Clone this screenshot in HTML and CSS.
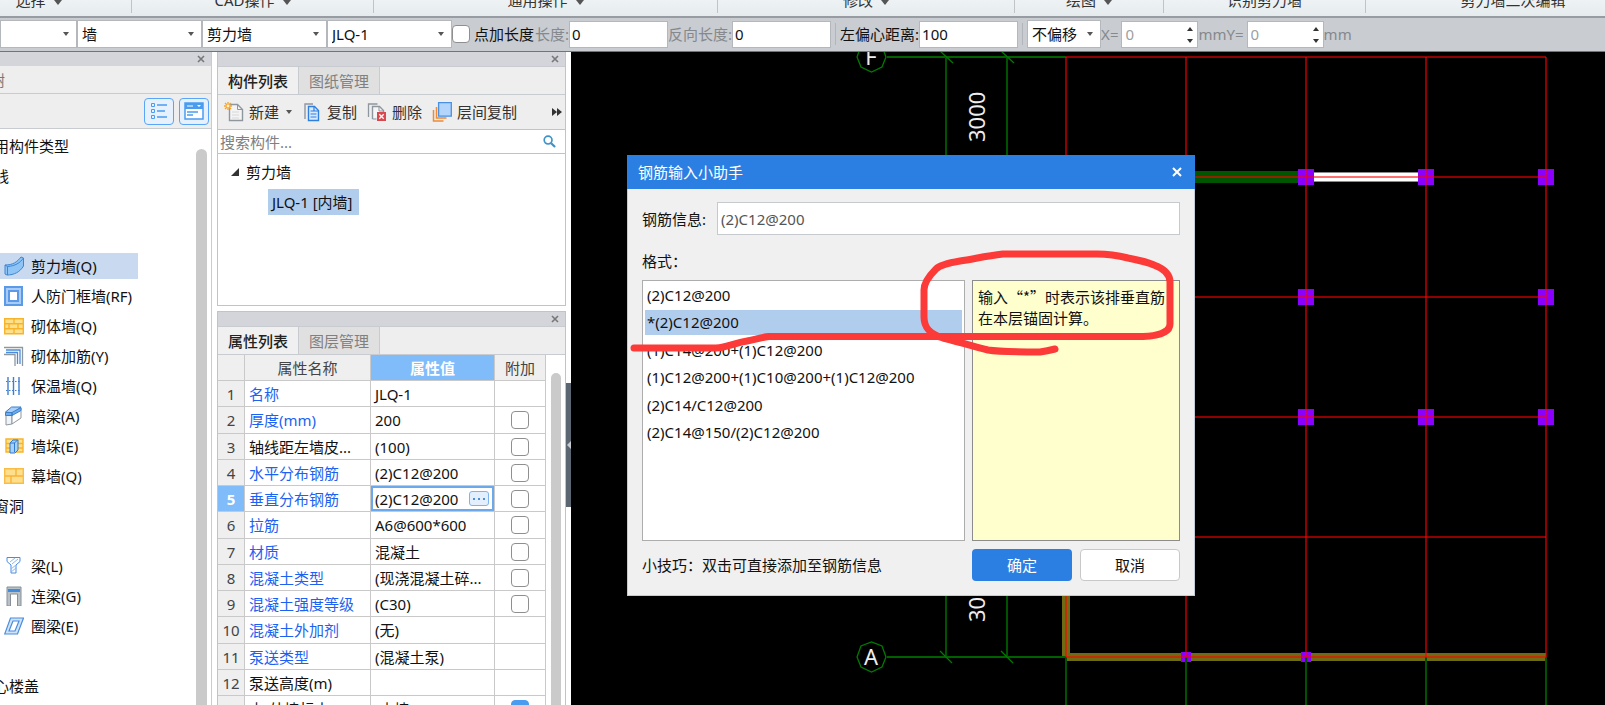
FILE: index.html
```html
<!DOCTYPE html>
<html lang="zh-CN">
<head>
<meta charset="utf-8">
<title>钢筋输入小助手</title>
<link rel="stylesheet" href="styles.css">
</head>
<body>
<header class="ribbon">
  <div class="group g-select"><span>选择</span><i class="caret"></i></div>
  <div class="group g-cad"><span>CAD操作</span><i class="caret"></i></div>
  <div class="group g-common"><span>通用操作</span><i class="caret"></i></div>
  <div class="group g-modify"><span>修改</span><i class="caret"></i></div>
  <div class="group g-draw"><span>绘图</span><i class="caret"></i></div>
  <div class="group g-detect"><span>识别剪力墙</span></div>
  <div class="group g-edit"><span>剪力墙二次编辑</span></div>
</header>

<form class="options">
  <span class="combo combo-floor"><select aria-label="楼层"><option></option></select></span>
  <span class="combo"><select aria-label="类别"><option>墙</option></select></span>
  <span class="combo"><select aria-label="类型"><option>剪力墙</option></select></span>
  <span class="combo"><select aria-label="构件"><option>JLQ-1</option></select></span>
  <label class="check-label"><input type="checkbox" class="check">点加长度</label>
  <label class="dim" for="len">长度:</label><input id="len" class="field" type="text" value="0">
  <label class="dim" for="rev">反向长度:</label><input id="rev" class="field" type="text" value="0">
  <i class="bar"></i>
  <label for="ecc">左偏心距离:</label><input id="ecc" class="field" type="text" value="100">
  <i class="bar"></i>
  <span class="combo combo-shift"><select aria-label="偏移"><option>不偏移</option></select></span>
  <label class="dim" for="ox">X=</label>
  <span class="spin"><input id="ox" type="text" value="0" disabled><button type="button" class="up" aria-label="增加X"></button><button type="button" class="down" aria-label="减少X"></button></span>
  <label class="dim" for="oy">mmY=</label>
  <span class="spin"><input id="oy" type="text" value="0" disabled><button type="button" class="up" aria-label="增加Y"></button><button type="button" class="down" aria-label="减少Y"></button></span>
  <span class="dim">mm</span>
</form>

<main class="workspace">
  <aside class="nav">
    <div class="strip"><button type="button" class="x" aria-label="关闭导航"><svg viewBox="0 0 8 8"><path d="M1 1l6 6M7 1l-6 6"/></svg></button></div>
    <div class="nav-tab"><span>树</span></div>
    <div class="nav-tools">
      <button type="button" aria-label="列表视图"><svg width="18" height="20" viewBox="0 0 18 20" fill="none" stroke="#4a9cf0"><path d="M1.500 2.500h3v3h-3zM1.500 8.500h3v3h-3zM1.500 14.500h3v3h-3z"/><path d="M7 4h10M7 10h8M7 16h10" stroke-width="1.500"/></svg></button>
      <button type="button" aria-label="卡片视图"><svg width="20" height="20" viewBox="0 0 20 20"><path d="M1 2h18v16H1z" fill="#fff" stroke="#4a9cf0" stroke-width="1.500"/><path d="M1 2h18v6H1z" fill="#4a9cf0"/><path d="M4 4v2M6 4v2M8 4v2" stroke="#fff"/><path d="M13 4h4l-2 2z" fill="#fff"/><path d="M3 11h11M3 14h6" stroke="#4a9cf0" stroke-width="1.500"/></svg></button>
    </div>
    <div class="nav-body">
      <ul class="types">
        <li class="head">用构件类型</li>
        <li class="head">线</li>
        <li></li>
        <li></li>
        <li class="on"><svg viewBox="0 0 20 20"><path d="M1 9C9 9 13 6 17 1l2.500 1v8C16 16 10 19 3 19l-2-1z" fill="#8fc4f6" stroke="#3e86d0"/><path d="M1 9l2.500 1.500C11 10 16 7 19.500 2M3.500 10.500V19" fill="none" stroke="#3e86d0"/></svg><span>剪力墙(Q)</span></li>
        <li><svg viewBox="0 0 20 20"><path d="M0 0h19v20H0z" fill="#5b9ae6"/><path d="M2 2h15v16H2z" fill="#a9cbf5"/><path d="M4 4h11v12H4z" fill="#5b9ae6"/><path d="M6 6h7v8H6z" fill="#fff"/></svg><span>人防门框墙(RF)</span></li>
        <li><svg viewBox="0 0 20 20"><path d="M.7 2.700h18.600v15H.7z" fill="#ffe08a" stroke="#f8b32c" stroke-width="1.400"/><path d="M1 7.700h18M1 12.700h18M10 3v5M5 8v5M14 8v5M10 13v5" stroke="#f8b32c" stroke-width="1.400"/></svg><span>砌体墙(Q)</span></li>
        <li><svg viewBox="0 0 20 20" fill="none"><path d="M0 1.500h18.500V20M0 8.500h11V20" stroke="#8f979e" stroke-width="1.300"/><path d="M2 4h14v14M2 6.500h11.500V18" stroke="#4a8cdc" stroke-width="1.300"/></svg><span>砌体加筋(Y)</span></li>
        <li><svg viewBox="0 0 20 20" fill="none" stroke="#3f7fd0"><path d="M4 1v18M9.500 1v18M15 1v18" stroke-width="1.400"/><path d="M2 5.500h15M2 14.500h15" stroke-dasharray="1.500 1.500"/></svg><span>保温墙(Q)</span></li>
        <li><svg viewBox="0 0 20 20"><path d="M2 7h6v11l-6 1z" fill="#eef4fa" stroke="#8f979e"/><path d="M8 8l9-6v10l-9 6z" fill="#fff" stroke="#8f979e"/><path d="M1.500 6l6-5h9.500l-8 6z" fill="#a9d0fa" stroke="#3e7fc8"/><path d="M1.500 6.500h6.500V9.500H1.500zM8 6.500l9-5v3l-9 5z" fill="#6daef2" stroke="#3e7fc8"/></svg><span>暗梁(A)</span></li>
        <li><svg viewBox="0 0 20 20"><path d="M2 3h17v13H2z" fill="#ffe08a" stroke="#f8b32c" stroke-width="1.400"/><path d="M2 7.500h17M2 12h17" stroke="#f8b32c" stroke-width="1.400"/><path d="M6 7l3-3h5v10l-3 3H6z" fill="#a9d0fa" stroke="#2f7bd0"/><path d="M10.500 7v9M6 7h4.500l3-3" fill="none" stroke="#2f7bd0"/></svg><span>墙垛(E)</span></li>
        <li><svg viewBox="0 0 20 20"><path d="M.7 2.700h18.600v14.600H.7z" fill="#ffdf8c" stroke="#f9bd45" stroke-width="1.400"/><path d="M1 10h18M12 3v7M7 10v7" stroke="#f9b23a" stroke-width="1.400"/></svg><span>幕墙(Q)</span></li>
        <li class="head">窗洞</li>
        <li></li>
        <li><svg viewBox="0 0 20 20" fill="none" stroke="#4a8cdc"><path d="M3 1.500h13v4L12 9v8H7V9L3 5.500z"/><path d="M6 6l5-4M8 8l6-5M7 13l5-4M7 16l5-4" stroke="#8db9ec"/></svg><span>梁(L)</span></li>
        <li><svg viewBox="0 0 20 20"><path d="M3 1h14v19h-3.500V8h-7v12H3z" fill="#b9c0c6" stroke="#87909a"/><path d="M4 3h12v3H4z" fill="#3e8be0"/></svg><span>连梁(G)</span></li>
        <li><svg viewBox="0 0 20 20" fill="#cfe3fb" fill-rule="evenodd" stroke="#4a8cdc"><path d="M6.500 2h13l-6 16H.7zM9 5L5 15h6l4-10z" stroke-width="1.200"/></svg><span>圈梁(E)</span></li>
        <li></li>
        <li class="head">心楼盖</li>
      </ul>
      <div class="thumb"></div>
    </div>
  </aside>

  <div class="middle">
    <section class="panel parts">
      <div class="strip"><button type="button" class="x" aria-label="关闭构件列表"><svg viewBox="0 0 8 8"><path d="M1 1l6 6M7 1l-6 6"/></svg></button></div>
      <div class="tabs"><button type="button" class="tab active">构件列表</button><button type="button" class="tab">图纸管理</button></div>
      <div class="tools">
        <button type="button" class="tool"><svg viewBox="0 0 20 20"><path d="M5.500 2.500h8l5 5v11h-13z" fill="#f4f4f4" stroke="#8f979e" stroke-width="1.400"/><path d="M13.500 2.500v5h5" fill="none" stroke="#8f979e"/><path d="M8 10h7M8 13h7M8 16h7" stroke="#d8d8d8"/><path d="M4 0v8M0 4h8M1 1l6 6M7 1L1 7" stroke="#f9a52c" stroke-width="1.400"/><circle cx="4" cy="4" r="1.400" fill="#fff3d0"/></svg>新建<i class="caret small"></i></button>
        <button type="button" class="tool"><svg viewBox="0 0 20 20"><path d="M3 17V2h8" fill="none" stroke="#8f979e" stroke-width="1.400"/><path d="M6.500 4.500h6l4 4v10h-10z" fill="#d9eaff" stroke="#2f7fdc" stroke-width="1.400"/><path d="M12 4.500v4.500h4.500M8.500 9h3M8.500 12h6M8.500 15h6" fill="none" stroke="#2f7fdc" stroke-width="1.200"/></svg>复制</button>
        <button type="button" class="tool"><svg viewBox="0 0 20 20"><path d="M1.500 15V2h9" fill="none" stroke="#8f979e" stroke-width="1.300"/><path d="M5.500 17V4.500h7l4 4V12" fill="#f6f6f6" stroke="#8f979e" stroke-width="1.400"/><path d="M5.500 17h4M12 4.500V9h4.500" fill="none" stroke="#8f979e"/><path d="M10 10h9v9h-9z" fill="#d9484c"/><path d="M12.300 12.300l4.400 4.400M16.700 12.300l-4.400 4.400" stroke="#fff" stroke-width="1.300"/></svg>删除</button>
        <button type="button" class="tool"><svg viewBox="0 0 20 20"><path d="M1.500 8v11h10M4.500 5v11h10" fill="none" stroke="#f08a35" stroke-width="1.500"/><path d="M6.600.7h12.700v13.500H6.600z" fill="#b3d4fb" stroke="#4a90e2" stroke-width="1.300"/></svg>层间复制</button>
        <button type="button" class="more" aria-label="更多"><svg viewBox="0 0 10 8"><path d="M0 0l5 4-5 4zM5 0l5 4-5 4z" fill="#333"/></svg></button>
      </div>
      <div class="search"><input type="text" aria-label="搜索构件" placeholder="搜索构件..."><svg viewBox="0 0 14 14" fill="none" stroke="#3d93c8"><circle cx="5.500" cy="5.500" r="4.200" stroke-width="1.800"/><path d="M8.800 8.800L13 13" stroke-width="2.400"/></svg></div>
      <div class="tree">
        <div class="node"><svg viewBox="0 0 8 8"><path d="M8 0v8H0z" fill="#333"/></svg>剪力墙</div>
        <div class="leaf"><span>JLQ-1 [内墙]</span></div>
      </div>
    </section>

    <section class="panel props">
      <div class="strip"><button type="button" class="x" aria-label="关闭属性列表"><svg viewBox="0 0 8 8"><path d="M1 1l6 6M7 1l-6 6"/></svg></button></div>
      <div class="tabs"><button type="button" class="tab active">属性列表</button><button type="button" class="tab">图层管理</button></div>
      <div class="grid-area">
        <table>
          <colgroup><col class="c-num"><col class="c-name"><col class="c-value"><col class="c-extra"></colgroup>
          <thead><tr><th></th><th>属性名称</th><th class="active">属性值</th><th>附加</th></tr></thead>
          <tbody>
            <tr><th>1</th><td class="link">名称</td><td>JLQ-1</td><td></td></tr>
            <tr><th>2</th><td class="link">厚度(mm)</td><td>200</td><td><input type="checkbox" class="check" aria-label="厚度附加"></td></tr>
            <tr><th>3</th><td>轴线距左墙皮...</td><td>(100)</td><td><input type="checkbox" class="check" aria-label="轴线距附加"></td></tr>
            <tr><th>4</th><td class="link">水平分布钢筋</td><td>(2)C12@200</td><td><input type="checkbox" class="check" aria-label="水平分布钢筋附加"></td></tr>
            <tr class="current"><th>5</th><td class="link">垂直分布钢筋</td><td class="edit"><div><input type="text" aria-label="垂直分布钢筋" value="(2)C12@200"><button type="button" aria-label="打开输入助手"><svg viewBox="0 0 12 2"><path d="M0 0h2v2H0zM5 0h2v2H5zM10 0h2v2h-2z" fill="#4a8fd8"/></svg></button></div></td><td><input type="checkbox" class="check" aria-label="垂直分布钢筋附加"></td></tr>
            <tr><th>6</th><td class="link">拉筋</td><td>A6@600*600</td><td><input type="checkbox" class="check" aria-label="拉筋附加"></td></tr>
            <tr><th>7</th><td class="link">材质</td><td>混凝土</td><td><input type="checkbox" class="check" aria-label="材质附加"></td></tr>
            <tr><th>8</th><td class="link">混凝土类型</td><td>(现浇混凝土碎...</td><td><input type="checkbox" class="check" aria-label="混凝土类型附加"></td></tr>
            <tr><th>9</th><td class="link">混凝土强度等级</td><td>(C30)</td><td><input type="checkbox" class="check" aria-label="强度等级附加"></td></tr>
            <tr><th>10</th><td class="link">混凝土外加剂</td><td>(无)</td><td></td></tr>
            <tr><th>11</th><td class="link">泵送类型</td><td>(混凝土泵)</td><td></td></tr>
            <tr><th>12</th><td>泵送高度(m)</td><td></td><td></td></tr>
            <tr><th>13</th><td>内/外墙标志</td><td>(内墙)</td><td><input type="checkbox" class="check" aria-label="内外墙标志附加" checked></td></tr>
          </tbody>
        </table>
        <div class="thumb"></div>
      </div>
    </section>
  </div>

  <div class="splitter"><button type="button" aria-label="折叠面板"><svg viewBox="0 0 4 8"><path d="M4 0v8L0 4z" fill="#c8ccd0"/></svg></button></div>

  <section class="canvas">
    <svg class="drawing" viewBox="571 52 1034 653" preserveAspectRatio="xMinYMin slice">
      <path d="M1195 177H1298" stroke="#005500" stroke-width="12"/>
      <path d="M1314 177H1418" stroke="#8a8a8a" stroke-width="10"/>
      <path d="M1314 177H1418" stroke="#fff" stroke-width="8"/>
      <path d="M1066 590V657" stroke="#6f6b14" stroke-width="8"/>
      <path d="M1066 657H1546" stroke="#6f6b14" stroke-width="8"/>
      <g fill="#8a00ff">
        <path d="M1298 169h16v16h-16zM1418 169h16v16h-16zM1538 169h16v16h-16zM1298 289h16v16h-16zM1538 289h16v16h-16zM1298 409h16v16h-16zM1418 409h16v16h-16zM1538 409h16v16h-16z"/>
        <path d="M1181 652h10v10h-10zM1301 652h10v10h-10z"/>
      </g>
      <g stroke="#005200" stroke-width="2">
        <path d="M887 57H1066M887 657H1066" stroke="#006000"/>
        <path d="M946 57V657M1007 57V657"/>
        <path d="M1066 657V705M1186 657V705M1306 657V705M1426 657V705M1546 657V705"/>
      </g>
      <g fill="none" stroke="#007a00" stroke-width="1.300">
        <path d="M940 51l13 12M1001 51l13 12M940 651l12 12M1001 651l12 12"/>
        <path d="M886 57l-4 10-10.500 5-10.500-5-4-10 4-11 10.500-4 10.500 4z"/>
        <path d="M886 657l-4 10-10.500 5-10.500-5-4-10 4-11 10.500-4 10.500 4z"/>
      </g>
      <g fill="none" stroke="#ff0000" stroke-opacity=".56" stroke-width="2">
        <path d="M1066 57H1546M1066 177H1546M1066 297H1546M1066 417H1546M1066 537H1546M1066 657H1546"/>
        <path d="M1066 57V657M1186 57V657M1306 57V657M1426 57V657M1546 57V657"/>
      </g>
      <g class="axis-text">
        <text x="871" y="65" text-anchor="middle">F</text>
        <text x="871" y="665" text-anchor="middle">A</text>
        <text transform="translate(985 142) rotate(-90)">3000</text>
        <text transform="translate(985 622) rotate(-90)">3000</text>
      </g>
    </svg>

    <form class="dialog" role="dialog" aria-labelledby="dlg-title">
      <div class="title"><span id="dlg-title">钢筋输入小助手</span><button type="button" aria-label="关闭"><svg viewBox="0 0 10 10"><path d="M1 1l8 8M9 1L1 9"/></svg></button></div>
      <div class="body">
        <div class="info"><label for="rebar">钢筋信息:</label><input id="rebar" type="text" value="(2)C12@200"></div>
        <div class="format">格式：</div>
        <div class="columns">
          <ul class="formats">
            <li>(2)C12@200</li>
            <li class="on">*(2)C12@200</li>
            <li>(1)C14@200+(1)C12@200</li>
            <li>(1)C12@200+(1)C10@200+(1)C12@200</li>
            <li>(2)C14/C12@200</li>
            <li>(2)C14@150/(2)C12@200</li>
          </ul>
          <p class="hint">输入“*”时表示该排垂直筋在本层锚固计算。</p>
        </div>
        <div class="foot"><span>小技巧：双击可直接添加至钢筋信息</span><button type="button" class="ok">确定</button><button type="button" class="cancel">取消</button></div>
      </div>
      <svg class="markup" viewBox="627 155 568 441"><path d="M634 348H716C728 347 734 343 747 341C757 339 762 337 769 336.500H1143C1156 336 1170 333 1170 324V282C1170 273 1162 268 1154 265C1148 262 1138 260 1128 258C1116 255 1108 254 1097 254H1003C985 256 974 259 960 261C948 263 940 265 936 269C929 276 924 284 924 290V317C924 328 930 334 943 338C955 341 975 347 988 350C1000 352 1018 352 1040 352C1047 351 1051 350 1055 349"/></svg>
    </form>
  </section>
</main>
</body>
</html>
```

FILE: styles.css
```css
* { box-sizing: border-box; }

body {
  margin: 0;
  height: 100vh;
  display: flex;
  flex-direction: column;
  overflow: hidden;
  background: #fff;
  color: #111;
  font: 15px/20px "Noto Sans", "Noto Sans CJK SC", sans-serif;
}

button, input, select { font: inherit; color: inherit; margin: 0; }
button { padding: 0; border: 0; background: none; }
ul { margin: 0; padding: 0; list-style: none; }
svg { display: block; }

.caret {
  border: 4px solid transparent;
  border-top: 5px solid #555;
  border-bottom: 0;
}
.caret.small { border-width: 4px 3px 0; margin-left: 2px; }

/* Ribbon */
.ribbon {
  display: flex;
  flex: none;
  height: 18px;
  overflow: hidden;
  background: linear-gradient(#eef2f4, #e6ebed);
  border-bottom: 2px solid #979ca2;
  color: #333;
}
.group {
  flex: none;
  display: flex;
  justify-content: center;
  align-items: center;
  gap: 8px;
  height: 13px;
  border-right: 1px solid #c0c4c8;
}
.group span { margin-top: -14px; }
.group .caret { margin-top: -8px; }
.g-select { width: 186px; margin-left: -54px; }
.g-cad { width: 242px; }
.g-common { width: 344px; }
.g-modify { width: 297px; }
.g-draw { width: 149px; }
.g-detect { width: 202px; }
.g-edit { width: 294px; border: 0; }

/* Option bar */
.options {
  flex: none;
  display: flex;
  align-items: center;
  height: 34px;
  padding-bottom: 1px;
  overflow: hidden;
  background: #c9ccd1;
  border-bottom: 1px solid #70757b;
  white-space: nowrap;
}
.options > * { flex: none; }
.combo { position: relative; width: 125px; }
.combo-floor { width: 77px; }
.combo-shift { width: 74px; }
.combo select {
  appearance: none;
  display: block;
  width: 100%;
  height: 28px;
  padding: 0 4px;
  border: 1px solid #b4b7bb;
  border-radius: 0;
  background: #fff;
}
.combo::after {
  content: "";
  position: absolute;
  right: 8px;
  top: 12px;
  border: 3px solid transparent;
  border-top: 4px solid #555;
  border-bottom: 0;
}
.check {
  appearance: none;
  display: block;
  width: 18px;
  height: 18px;
  border: 1px solid #8f8f8f;
  border-radius: 4px;
  background: #fff;
}
.check:checked { background: #4a9cf0; border-color: #4a9cf0; }
.check-label { display: flex; align-items: center; gap: 4px; margin-right: 1px; }
.dim { color: #85888c; }
.field {
  width: 99px;
  height: 27px;
  padding: 0 2px;
  border: 1px solid #b4b7bb;
  background: #fff;
}
.bar { width: 1px; height: 22px; margin: 0 4px; background: #b2b6bb; }
.spin { position: relative; width: 77px; margin-left: 3px; }
.spin input {
  display: block;
  width: 100%;
  height: 27px;
  padding: 0 3px;
  border: 1px solid #b4b7bb;
  background: #fff;
  color: #a0a0a0;
}
.spin button {
  position: absolute;
  right: 5px;
  border: 3px solid transparent;
}
.spin .up { top: 6px; border-top: 0; border-bottom: 4px solid #333; }
.spin .down { bottom: 5px; border-bottom: 0; border-top: 4px solid #333; }

/* Workspace */
.workspace {
  flex: 1;
  min-height: 0;
  display: grid;
  grid-template-columns: 212px 349px 5px 1fr;
  grid-template-rows: minmax(0, 1fr);
}
.workspace .middle { margin-left: 5px; margin-right: -5px; }
.workspace .splitter { margin-left: 5px; margin-right: -5px; }
.workspace .canvas { margin-left: 5px; }

.strip {
  flex: none;
  display: flex;
  justify-content: flex-end;
  align-items: center;
  height: 14px;
  padding-right: 6px;
  background: #d3d5da;
}
.strip svg { width: 8px; height: 8px; stroke: #777; stroke-width: 1.6; }
.thumb { background: #cacaca; border-radius: 6px 6px 0 0; }

/* Navigation */
.nav {
  display: flex;
  flex-direction: column;
  border-right: 1px solid #c8cbd0;
}
.nav-tab {
  flex: none;
  height: 28px;
  line-height: 28px;
  overflow: hidden;
  background: #eee;
  border-bottom: 1px solid #c8cbd0;
  color: #777;
}
.nav-tab span { margin-left: -10px; }
.nav-tools {
  flex: none;
  display: flex;
  justify-content: flex-end;
  align-items: center;
  gap: 5px;
  height: 35px;
  padding-right: 2px;
  background: #eee;
  border-bottom: 1px solid #c8cbd0;
}
.nav-tools button {
  display: grid;
  place-items: center;
  width: 30px;
  height: 27px;
  border: 1px solid #58a6f5;
  border-radius: 4px;
  background: #e6f1fd;
}
.nav-body {
  flex: 1;
  min-height: 0;
  display: flex;
  justify-content: space-between;
  overflow: hidden;
  padding-top: 2px;
}
.nav-body .thumb { width: 11px; margin: 18px 4px 0 0; }
.types { width: 138px; white-space: nowrap; }
.types li {
  display: flex;
  align-items: center;
  height: 26px;
  margin: 2px 0 4px;
  padding-left: 4px;
  gap: 7px;
}
.types li.head { padding-left: 0; text-indent: -6px; }
.types li.on { background: #c9d9f0; }
.types svg { width: 20px; height: 20px; }

/* Middle panels */
.middle {
  display: grid;
  grid-template-rows: 254px minmax(0, 1fr);
  gap: 5px;
}
.panel {
  display: flex;
  flex-direction: column;
  min-height: 0;
  border: 1px solid #c0c4c9;
  border-top: 0;
}
.props { border-top: 1px solid #c0c4c9; border-bottom: 0; }
.tabs {
  flex: none;
  display: flex;
  height: 29px;
  background: #eee;
  border-top: 1px solid #c8cbd0;
  border-bottom: 1px solid #c8cbd0;
}
.tab {
  width: 81px;
  border-right: 1px solid #c8cbd0;
  background: #e0e0e0;
  color: #808080;
}
.tab.active { background: #f0f0f0; color: #222; font-weight: 500; }
.tools {
  flex: none;
  display: flex;
  align-items: center;
  height: 35px;
  padding: 0 3px 0 6px;
  gap: 10px;
  background: #eee;
  border-bottom: 1px solid #c0c4c9;
  color: #333;
}
.tool { display: flex; align-items: center; gap: 5px; }
.tool svg { width: 20px; height: 20px; }
.more { margin-left: auto; }
.more svg { width: 10px; height: 8px; }
.search {
  flex: none;
  display: flex;
  align-items: center;
  height: 24px;
  padding: 0 9px 0 2px;
  border-bottom: 1px solid #c0c4c9;
}
.search input { flex: 1; min-width: 0; height: 22px; padding: 0; border: 0; outline: 0; }
.search input::placeholder { color: #808080; opacity: 1; }
.search svg { width: 13px; height: 13px; }
.tree { padding: 3px 12px; }
.node { display: flex; align-items: center; gap: 7px; height: 30px; padding-left: 1px; }
.node svg { width: 8px; height: 8px; }
.leaf { padding: 2px 0 0 38px; }
.leaf span { display: inline-block; padding: 3px 6px 3px 4px; background: #b1cdee; }

.grid-area {
  flex: 1;
  min-height: 0;
  display: flex;
  justify-content: space-between;
  overflow: hidden;
}
.grid-area .thumb { width: 10px; margin: 18px 4px 0 0; }
table {
  table-layout: fixed;
  width: 328px;
  height: max-content;
  border-collapse: separate;
  border-spacing: 0;
  white-space: nowrap;
}
.c-num { width: 27px; }
.c-name { width: 126px; }
.c-value { width: 124px; }
.c-extra { width: 51px; }
th, td {
  height: 26px;
  padding: 0 4px;
  line-height: 20px;
  border-right: 1px solid #c9c9c9;
  border-bottom: 1px solid #c9c9c9;
}
tbody tr:nth-child(4n + 2) > * { height: 27px; }
th { background: #efefef; color: #444; font-weight: 400; padding: 0; }
th.active, .current th { background: #80bbfa; color: #fff; font-weight: 700; }
td.link { color: #1c62f2; }
td .check { margin: 0 auto; }
td.edit { padding: 0; }
.edit div {
  display: flex;
  align-items: center;
  height: 25px;
  border: 2px solid #6ba9ec;
  padding: 0 3px 0 2px;
}
.edit input { flex: 1; min-width: 0; height: 20px; padding: 0; border: 0; outline: 0; background: none; }
.edit button {
  display: grid;
  place-items: center;
  width: 20px;
  height: 15px;
  border: 1px solid #7db4ee;
  border-radius: 3px;
  background: #e3effc;
}
.edit button svg { width: 12px; height: 2px; }

/* Collapse handle */
.splitter { padding-top: 331px; }
.splitter button {
  display: grid;
  place-items: center;
  width: 5px;
  height: 124px;
  background: #5b6672;
}
.splitter svg { width: 4px; height: 8px; }

/* Drawing canvas */
.canvas { position: relative; overflow: hidden; background: #000; }
.drawing { width: 100%; height: 100%; }
.axis-text { fill: #eee; font-size: 22px; }

/* Dialog */
.dialog {
  position: absolute;
  left: 56px;
  top: 103px;
  width: 568px;
  background: #f0f0f0;
}
.title {
  display: flex;
  justify-content: space-between;
  align-items: center;
  height: 34px;
  padding: 0 13px 0 11px;
  background: #2c7fe2;
  color: #fff;
}
.title svg { width: 10px; height: 10px; stroke: #fff; stroke-width: 2; }
.body { padding: 13px 14px 14px; border: 1px solid #c3cbd8; border-top: 0; }
.info { display: flex; align-items: center; gap: 11px; }
.info input {
  flex: 1;
  height: 33px;
  padding: 0 3px;
  border: 1px solid #c6c9cd;
  background: #fff;
  color: #555;
}
.format { margin: 16px 0 9px; }
.columns { display: grid; grid-template-columns: 323px 1fr; gap: 7px; height: 261px; }
.formats { padding: 2px; border: 1px solid #adadad; background: #fff; }
.formats li { height: 25px; line-height: 25px; margin-bottom: 2px; padding-left: 2px; }
.formats li:nth-child(even) { margin-bottom: 3px; }
.formats li.on { background: #b1cdee; }
.hint {
  margin: 0;
  padding: 5px;
  border: 1px solid #8c8c8c;
  background: #fffecd;
  font-family: "Noto Sans CJK SC", sans-serif;
  line-height: 21px;
}
.foot { display: flex; align-items: center; gap: 8px; margin-top: 8px; }
.foot span { flex: 1; }
.foot button { width: 100px; height: 32px; border-radius: 4px; }
.ok { background: #2c7fe2; color: #fff; }
.foot .cancel { border: 1px solid #c8c8c8; background: #fff; }
.markup {
  position: absolute;
  inset: 0;
  width: 100%;
  height: 100%;
  pointer-events: none;
  fill: none;
  stroke: #fc3a38;
  stroke-width: 7;
  stroke-linecap: round;
  stroke-linejoin: round;
}
```
